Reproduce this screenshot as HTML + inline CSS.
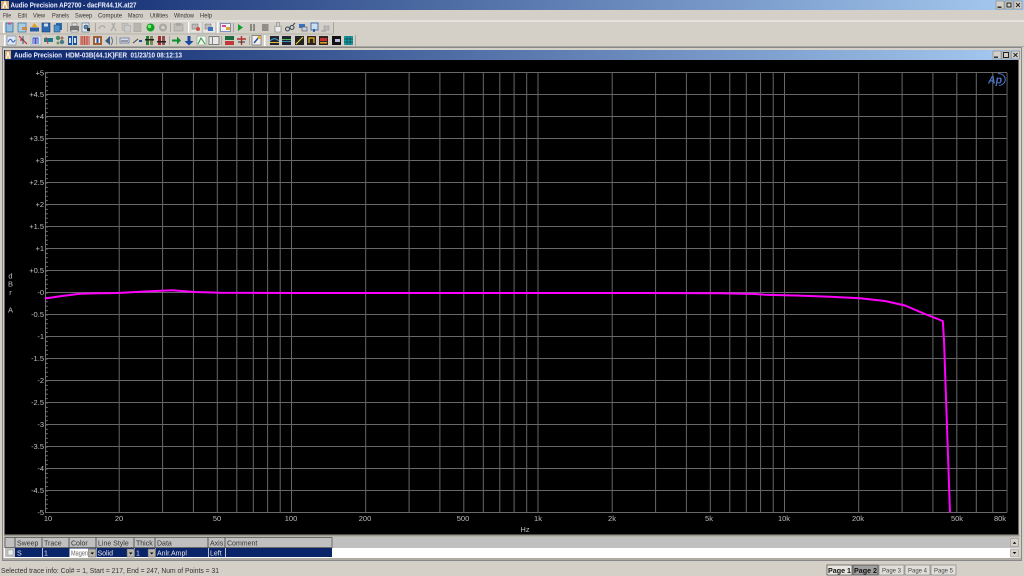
<!DOCTYPE html>
<html><head><meta charset="utf-8"><title>Audio Precision AP2700</title>
<style>
html,body{margin:0;padding:0;background:#d4d0c8;width:1024px;height:576px;overflow:hidden}
svg{display:block;filter:blur(.3px)}
text{font-family:"Liberation Sans",sans-serif}
.m{font-size:6.5px;fill:#333}
.y{font-size:7.5px;fill:#c0c0c0;text-anchor:end}
.x{font-size:7.5px;fill:#c0c0c0;text-anchor:middle}
.h{font-size:7px;fill:#333}
.r{font-size:7px;fill:#e4e4e4}
</style></head><body>
<svg width="1024" height="576" viewBox="0 0 1024 576" xmlns="http://www.w3.org/2000/svg">
<defs>
<linearGradient id="tb" x1="0" x2="1" y1="0" y2="0"><stop offset="0" stop-color="#0a246a"/><stop offset="1" stop-color="#a6caf0"/></linearGradient>
<g id="dec" stroke="#686868" stroke-width="1">
<line x1="74.2" x2="74.2" y1="72.5" y2="512.5"/><line x1="117.6" x2="117.6" y1="72.5" y2="512.5"/><line x1="148.4" x2="148.4" y1="72.5" y2="512.5"/><line x1="172.3" x2="172.3" y1="72.5" y2="512.5"/><line x1="191.8" x2="191.8" y1="72.5" y2="512.5"/><line x1="208.3" x2="208.3" y1="72.5" y2="512.5"/><line x1="222.6" x2="222.6" y1="72.5" y2="512.5"/><line x1="235.2" x2="235.2" y1="72.5" y2="512.5"/><line x1="246.5" x2="246.5" y1="72.5" y2="512.5"/>
</g>
<clipPath id="pc"><rect x="45" y="70" width="962.5" height="445"/></clipPath>
</defs>

<!-- main title -->
<rect x="0" y="0" width="1024" height="10" fill="url(#tb)"/>
<rect x="1" y="1" width="8" height="8" fill="#d8b070"/><path d="M3 8 L5 2 L7 8" stroke="#fff" stroke-width="1.2" fill="none"/>
<text x="10.5" y="7.5" font-size="7" font-weight="bold" fill="#eef" textLength="126" lengthAdjust="spacingAndGlyphs">Audio Precision AP2700 - dacFR44.1K.at27</text>
<g>
<rect x="996" y="1" width="8" height="8" fill="#d4d0c8" stroke="#777" stroke-width=".5"/><rect x="997.5" y="6.5" width="4" height="1.4" fill="#222"/>
<rect x="1005" y="1" width="8" height="8" fill="#d4d0c8" stroke="#777" stroke-width=".5"/><rect x="1007" y="3" width="4" height="4" fill="none" stroke="#222" stroke-width="1"/>
<rect x="1014" y="1" width="8" height="8" fill="#d4d0c8" stroke="#777" stroke-width=".5"/><path d="M1016 3l4 4m0-4l-4 4" stroke="#222" stroke-width="1"/>
</g>

<!-- menu -->
<g class="m">
<text class="m" x="3" y="17.5" textLength="8" lengthAdjust="spacingAndGlyphs">File</text>
<text class="m" x="18" y="17.5" textLength="9" lengthAdjust="spacingAndGlyphs">Edit</text>
<text class="m" x="33" y="17.5" textLength="12" lengthAdjust="spacingAndGlyphs">View</text>
<text class="m" x="52" y="17.5" textLength="17" lengthAdjust="spacingAndGlyphs">Panels</text>
<text class="m" x="75" y="17.5" textLength="17" lengthAdjust="spacingAndGlyphs">Sweep</text>
<text class="m" x="98" y="17.5" textLength="24" lengthAdjust="spacingAndGlyphs">Compute</text>
<text class="m" x="128" y="17.5" textLength="15" lengthAdjust="spacingAndGlyphs">Macro</text>
<text class="m" x="150" y="17.5" textLength="18" lengthAdjust="spacingAndGlyphs">Utilities</text>
<text class="m" x="174" y="17.5" textLength="20" lengthAdjust="spacingAndGlyphs">Window</text>
<text class="m" x="200" y="17.5" textLength="12" lengthAdjust="spacingAndGlyphs">Help</text>
</g>
<rect x="0" y="20.5" width="1024" height="1" fill="#f4f3ef"/>
<rect x="0" y="33.5" width="334" height="1" fill="#b5b2aa"/>
<rect x="0" y="46" width="1024" height="1" fill="#aaa79f"/>

<!-- toolbar grippers/separators -->
<g fill="#fff">
<rect x="3" y="22" width="1.5" height="11"/><rect x="4" y="35" width="1.5" height="11"/>
<rect x="188" y="22" width="1.5" height="11"/><rect x="217" y="22" width="1.5" height="11"/>
<rect x="264" y="35" width="1.5" height="11"/>
</g>
<g fill="#a8a59d">
<rect x="67" y="23" width="1" height="9"/><rect x="95" y="23" width="1" height="9"/><rect x="170" y="23" width="1" height="9"/><rect x="233" y="23" width="1" height="9"/><rect x="333" y="22" width="1" height="11"/>
<rect x="116" y="36" width="1" height="9"/><rect x="169" y="36" width="1" height="9"/><rect x="221" y="36" width="1" height="9"/><rect x="249" y="36" width="1" height="9"/><rect x="355" y="35" width="1" height="11"/>
</g>

<!-- row 1 icons -->
<rect x="6" y="23" width="7" height="9" fill="#8fc0e0" stroke="#3a6a9a" stroke-width=".8"/><rect x="8" y="22.5" width="3" height="2" fill="#d04a80"/>
<rect x="18" y="23" width="8" height="9" fill="#a8cde4" stroke="#4a7aa0" stroke-width=".8"/><rect x="22" y="27" width="5" height="3" fill="#d08a40"/>
<path d="M30 31.5h9v-4h-9z" fill="#2a5aa0"/><path d="M34.500 23l3 4h-6z" fill="#e0a020"/>
<rect x="42" y="23" width="8" height="9" fill="#2a6ab0" stroke="#1a3a70" stroke-width=".6"/><rect x="44" y="23.500" width="4" height="3" fill="#cde"/>
<rect x="56" y="23" width="6" height="7" fill="#2a6ab0"/><rect x="54" y="25" width="6" height="7" fill="#4a90c8" stroke="#1a3a70" stroke-width=".5"/>
<rect x="70" y="26" width="9" height="5" fill="#777"/><rect x="72" y="23" width="5" height="3" fill="#ddd" stroke="#666" stroke-width=".5"/><rect x="71" y="30" width="7" height="2" fill="#eee" stroke="#666" stroke-width=".5"/>
<rect x="82" y="23" width="7" height="9" fill="#dde8f0" stroke="#6a7a90" stroke-width=".7"/><circle cx="86" cy="27" r="2" fill="#5a90c0" stroke="#234" stroke-width=".6"/><rect x="87" y="28" width="3" height="3" fill="#333"/>
<path d="M99 29c1-4 5-4 6-1" fill="none" stroke="#aaa" stroke-width="1.3"/>
<path d="M112 23l4 8m-1-8l-4 8" stroke="#aaa" stroke-width="1.3"/>
<rect x="122" y="23.500" width="6" height="7" fill="#c4c2bc" stroke="#aaa" stroke-width=".6"/><rect x="124.500" y="25.500" width="6" height="6.500" fill="#ccc" stroke="#aaa" stroke-width=".6"/>
<rect x="134" y="23.500" width="7" height="8" fill="#b8b6b0" stroke="#a0a0a0" stroke-width=".6"/>
<circle cx="150.500" cy="27.500" r="4" fill="#12a020"/><circle cx="149.500" cy="26.500" r="1.700" fill="#7fe87f"/>
<circle cx="163" cy="27.500" r="4" fill="#aaa8a2"/><circle cx="163" cy="27.500" r="1.800" fill="#d4d0c8"/>
<rect x="174" y="24" width="9" height="7" fill="#c0beb8" stroke="#999" stroke-width=".6"/><rect x="176" y="23" width="5" height="3" fill="#a8a6a0"/>
<rect x="190" y="22" width="12" height="11" fill="#e4e2dc" stroke="#bbb" stroke-width=".5"/>
<rect x="192" y="24" width="6" height="5" fill="#bbb" stroke="#777" stroke-width=".6"/><circle cx="198" cy="29" r="2" fill="#c85040"/>
<rect x="203" y="22" width="12.500" height="11" fill="#e8e6e0" stroke="#b8b8b8" stroke-width=".5"/>
<rect x="205" y="24" width="6" height="5" fill="#bbb" stroke="#777" stroke-width=".6"/><rect x="208" y="27" width="5" height="4" fill="#3a70c0"/>
<rect x="220.500" y="23.500" width="10" height="8" fill="#f0f0f8" stroke="#5a70a0" stroke-width=".7"/><rect x="222" y="25" width="4" height="2" fill="#d04a90"/><rect x="226" y="27" width="4" height="3" fill="#e0a030"/>
<path d="M238 24l5 3.500-5 3.500z" fill="#10a030"/>
<rect x="250" y="24" width="2" height="7" fill="#8a8880"/><rect x="253" y="24" width="2" height="7" fill="#8a8880"/>
<rect x="262" y="24" width="6.500" height="7" fill="#908e86"/>
<path d="M275 26h6v6h-6z" fill="#eee" stroke="#777" stroke-width=".6"/><rect x="276.500" y="22.500" width="3" height="4" fill="#ccc" stroke="#777" stroke-width=".5"/>
<circle cx="287.500" cy="29" r="2" fill="none" stroke="#345" stroke-width="1"/><circle cx="292" cy="27.500" r="2" fill="none" stroke="#345" stroke-width="1"/><path d="M293 25l2-2" stroke="#345"/>
<rect x="299" y="24" width="6" height="4" fill="#3a70c0"/><rect x="302" y="27" width="5" height="4" fill="#ccd" stroke="#456" stroke-width=".6"/>
<rect x="311" y="23" width="7" height="7" fill="#cde" stroke="#2a5aa0" stroke-width=".8"/><path d="M314 29v3" stroke="#12409a" stroke-width="1.500"/>
<rect x="324" y="26" width="5" height="4" fill="#bbb" stroke="#999" stroke-width=".6"/><path d="M321 31h5" stroke="#aaa" stroke-width="1.500"/>

<!-- row 2 icons -->
<rect x="7" y="36" width="9" height="9" fill="#dfe8f2" stroke="#7a8aa8" stroke-width=".7"/><path d="M8 42c2-4 3-3 4-1s2 1 3-1" fill="none" stroke="#3060c0" stroke-width="1"/>
<path d="M19 36l8 8M20 40h4" stroke="#c03030" stroke-width="1.200"/><path d="M23 36v8" stroke="#2a5a90"/>
<rect x="31" y="36" width="10" height="9" fill="#dfe4f2" stroke="#9aa" stroke-width=".6"/><path d="M33 44v-6h2v6m1 0v-6h2v6" fill="none" stroke="#4050c0" stroke-width="1"/>
<rect x="44" y="38" width="9" height="4" fill="#1a7a90"/><path d="M46 37l2 7" stroke="#c04040" stroke-width="1"/>
<circle cx="58" cy="38" r="2.200" fill="#4a8a6a"/><circle cx="62" cy="42" r="2.200" fill="#4a7a8a"/><circle cx="62" cy="38" r="1.500" fill="#a07050"/><circle cx="58" cy="43" r="1.500" fill="#6a9a5a"/>
<rect x="68" y="36" width="4" height="9" fill="#1a50a0"/><rect x="73" y="36" width="4" height="9" fill="#1a50a0"/><rect x="69" y="38" width="2" height="5" fill="#cde"/><rect x="74" y="38" width="2" height="5" fill="#cde"/>
<rect x="80" y="36" width="10" height="9" fill="#d88a80"/><path d="M82 36v9M84.500 36v9M87 36v9" stroke="#a84a3a" stroke-width=".8"/>
<rect x="93" y="36" width="9" height="9" fill="#a06030"/><rect x="95" y="38" width="5" height="5" fill="#eef"/><rect x="96.500" y="38" width="2" height="5" fill="#2050a0"/>
<path d="M105 41l5-5v9z" fill="#3a5a80"/><path d="M111 37c2 2 2 6 0 8" fill="none" stroke="#5a7a90"/>
<rect x="120" y="38" width="9" height="5" fill="#d8dcec" stroke="#5a6a9a" stroke-width=".7"/><path d="M121 41h7" stroke="#334" stroke-width=".8"/>
<path d="M133 43l5-4" stroke="#444" stroke-width="1"/><rect x="139" y="40" width="3" height="2" fill="#2050a0"/>
<rect x="146" y="36" width="3" height="9" fill="#2a7a3a"/><rect x="150" y="36" width="3" height="9" fill="#7a8a50"/><rect x="145" y="39" width="9" height="1.500" fill="#222"/>
<rect x="158" y="36" width="3" height="9" fill="#a03030"/><rect x="162" y="36" width="3" height="9" fill="#8a5050"/><rect x="157" y="41" width="9" height="1.500" fill="#222"/>
<path d="M172 39.500h5v-3l4 4-4 4v-3h-5z" fill="#109030"/>
<path d="M187.500 36h3v5h3l-4.500 4.500-4.500-4.500h3z" fill="#1a4aa0"/>
<rect x="197" y="36" width="9" height="9" fill="#eef4ee" stroke="#8a9a8a" stroke-width=".6"/><path d="M198 44l3-6 4 6" fill="none" stroke="#2a9a3a"/>
<rect x="209" y="36.500" width="10" height="8" fill="#e8e8e8" stroke="#666" stroke-width=".8"/><rect x="212" y="37" width=".8" height="7" fill="#666"/>
<rect x="225" y="36" width="9" height="4" fill="#1a6a40"/><rect x="225" y="41" width="9" height="4" fill="#c03a3a"/>
<path d="M237 39h9M241.500 36v9" stroke="#b03030" stroke-width="1.400"/><path d="M238 42h7" stroke="#333"/>
<rect x="252" y="35.500" width="9" height="9.500" fill="#f0f0f0" stroke="#666" stroke-width=".7"/><path d="M254 43l5-6" stroke="#204a90" stroke-width="1.400"/><rect x="258" y="36" width="3" height="3" fill="#e0b030"/>

<rect x="270" y="36" width="9" height="9" fill="#223"/><path d="M270 41c3-3 6-3 9 0" stroke="#3ab0d0" fill="none"/><rect x="270" y="42" width="9" height="1" fill="#e0c030"/>
<rect x="282" y="36" width="9" height="9" fill="#223"/><rect x="282" y="39" width="9" height="1" fill="#4ac050"/><rect x="282" y="41" width="9" height="1" fill="#3a90b0"/>
<rect x="295" y="36" width="9" height="9" fill="#222"/><path d="M296 44l7-7" stroke="#e0d030" stroke-width="1.200"/>
<rect x="307" y="36" width="9" height="9" fill="#322"/><path d="M309 43v-5h5v5" stroke="#e0c020" fill="none" stroke-width="1.200"/>
<rect x="319" y="36" width="9" height="9" fill="#322"/><rect x="320" y="38" width="7" height="3" fill="#c03030"/><rect x="320" y="42" width="7" height="1.500" fill="#d0a020"/>
<rect x="332" y="36" width="9" height="9" fill="#111"/><rect x="335" y="39" width="5" height="3" fill="#bbd"/>
<rect x="344" y="36" width="9" height="9" fill="#1a9aa0"/><path d="M344 39h9M344 42h9M347 36v9M350 36v9" stroke="#0a4a50" stroke-width=".7"/>

<!-- inner window -->
<rect x="2.500" y="47.500" width="1019" height="513" fill="#d4d0c8" stroke="#888" stroke-width="1"/>
<rect x="4" y="50" width="1016" height="10" fill="url(#tb)"/>
<rect x="5" y="50.500" width="6" height="8.500" fill="#d8b070"/><path d="M6.500 58.500L8 52l1.500 6.500" stroke="#fff" fill="none"/>
<text x="14" y="57.300" font-size="7" font-weight="bold" fill="#eef" textLength="168" lengthAdjust="spacingAndGlyphs" xml:space="preserve">Audio Precision  HDM-03B(44.1K)FER  01/23/10 08:12:13</text>
<rect x="993" y="51" width="8" height="8" fill="#d4d0c8" stroke="#777" stroke-width=".5"/><rect x="994" y="56.500" width="4" height="1.400" fill="#222"/>
<rect x="1002" y="51" width="8" height="8" fill="#d4d0c8" stroke="#777" stroke-width=".5"/><rect x="1003.500" y="52.500" width="5" height="5" fill="none" stroke="#222" stroke-width="1"/>
<rect x="1011.500" y="51" width="8" height="8" fill="#d4d0c8" stroke="#777" stroke-width=".5"/><path d="M1013.500 53l4 4m0-4l-4 4" stroke="#222" stroke-width="1"/>

<!-- plot -->
<rect x="4.500" y="60" width="1014" height="474.500" fill="#000"/>
<g clip-path="url(#pc)">
<line x1="45.500" x2="45.500" y1="72.500" y2="512.500" stroke="#707070"/>
<use href="#dec" x="45"/><use href="#dec" x="291.500"/><use href="#dec" x="538"/><use href="#dec" x="784.500"/>
</g>
<g stroke="#686868" stroke-width="1">
<line x1="45" x2="1007" y1="72.500" y2="72.500"/><line x1="45" x2="1007" y1="94.500" y2="94.500"/><line x1="45" x2="1007" y1="116.500" y2="116.500"/><line x1="45" x2="1007" y1="138.500" y2="138.500"/><line x1="45" x2="1007" y1="160.500" y2="160.500"/><line x1="45" x2="1007" y1="182.500" y2="182.500"/><line x1="45" x2="1007" y1="204.500" y2="204.500"/><line x1="45" x2="1007" y1="226.500" y2="226.500"/><line x1="45" x2="1007" y1="248.500" y2="248.500"/><line x1="45" x2="1007" y1="270.500" y2="270.500"/><line x1="45" x2="1007" y1="292.500" y2="292.500"/><line x1="45" x2="1007" y1="314.500" y2="314.500"/><line x1="45" x2="1007" y1="336.500" y2="336.500"/><line x1="45" x2="1007" y1="358.500" y2="358.500"/><line x1="45" x2="1007" y1="380.500" y2="380.500"/><line x1="45" x2="1007" y1="402.500" y2="402.500"/><line x1="45" x2="1007" y1="424.500" y2="424.500"/><line x1="45" x2="1007" y1="446.500" y2="446.500"/><line x1="45" x2="1007" y1="468.500" y2="468.500"/><line x1="45" x2="1007" y1="490.500" y2="490.500"/><line x1="45" x2="1007" y1="512.500" y2="512.500"/>
</g>
<line x1="46.500" x2="46.500" y1="72.500" y2="512.500" stroke="#777" stroke-width="2.500" stroke-dasharray="1 3.400"/>

<g class="y">
<text class="y" x="44" y="75.500">+5</text><text class="y" x="44" y="97">+4.5</text><text class="y" x="44" y="119">+4</text><text class="y" x="44" y="141">+3.5</text><text class="y" x="44" y="163">+3</text><text class="y" x="44" y="185">+2.5</text><text class="y" x="44" y="207">+2</text><text class="y" x="44" y="229">+1.5</text><text class="y" x="44" y="251">+1</text><text class="y" x="44" y="273">+0.5</text><text class="y" x="44" y="295">-0</text><text class="y" x="44" y="317">-0.5</text><text class="y" x="44" y="339">-1</text><text class="y" x="44" y="361">-1.5</text><text class="y" x="44" y="383">-2</text><text class="y" x="44" y="405">-2.5</text><text class="y" x="44" y="427">-3</text><text class="y" x="44" y="449">-3.5</text><text class="y" x="44" y="471">-4</text><text class="y" x="44" y="493">-4.5</text><text class="y" x="44" y="515">-5</text>
</g>
<g class="x">
<text class="x" x="48" y="521">10</text><text class="x" x="119" y="521">20</text><text class="x" x="217" y="521">50</text><text class="x" x="291" y="521">100</text><text class="x" x="365" y="521">200</text><text class="x" x="463" y="521">500</text><text class="x" x="538" y="521">1k</text><text class="x" x="612" y="521">2k</text><text class="x" x="709" y="521">5k</text><text class="x" x="784" y="521">10k</text><text class="x" x="858" y="521">20k</text><text class="x" x="957" y="521">50k</text><text class="x" x="1000" y="521">80k</text><text class="x" x="525" y="532">Hz</text>
</g>
<g class="x">
<text class="x" x="10.500" y="278.500">d</text><text class="x" x="10.500" y="286.500">B</text><text class="x" x="10.500" y="295">r</text><text class="x" x="10.500" y="312.500">A</text>
</g>
<!-- AP logo -->
<text x="988" y="83.500" font-size="11" font-weight="bold" font-style="italic" fill="#4a72c4" textLength="14" lengthAdjust="spacingAndGlyphs">Ap</text>
<path d="M998 73.500c9 0 10 11 1 12" fill="none" stroke="#4a72c4" stroke-width="1"/>
<!-- trace -->
<polyline fill="none" stroke="#ff00ff" stroke-width="2" stroke-linejoin="round" points="45,298.500 62,296 80,293.800 100,293.200 118,293 145,291.500 172,290.300 195,292 220,292.700 300,293 500,293 640,293 720,293.300 755,294 765,294.700 800,295.600 830,296.700 860,298.300 885,301 905,305.500 925,314 942.800,321 944,340 950,512.500"/>

<!-- table -->
<rect x="4" y="534.500" width="1015.500" height="2" fill="#9a978f"/>
<rect x="4" y="537" width="1015" height="11" fill="#c0c0c0"/>
<rect x="4" y="548" width="1015" height="10" fill="#fff"/>
<g fill="none" stroke="#555" stroke-width=".8">
<rect x="5" y="537.500" width="10" height="10"/><rect x="15" y="537.500" width="27" height="10"/><rect x="42" y="537.500" width="27" height="10"/><rect x="69" y="537.500" width="27" height="10"/><rect x="96" y="537.500" width="38" height="10"/><rect x="134" y="537.500" width="21" height="10"/><rect x="155" y="537.500" width="53" height="10"/><rect x="208" y="537.500" width="17" height="10"/><rect x="225" y="537.500" width="107" height="10"/>
</g>
<rect x="5" y="548" width="327" height="9" fill="#0a246a"/>
<rect x="5" y="548" width="10" height="9" fill="#c0c0c0"/>
<rect x="8" y="550" width="5" height="5" fill="#eee" stroke="#999" stroke-width=".5"/>
<rect x="69.500" y="548.500" width="26" height="8.500" fill="#fff"/>
<g fill="#fff"><rect x="42" y="548" width=".7" height="9"/><rect x="96" y="548" width=".7" height="9"/><rect x="134" y="548" width=".7" height="9"/><rect x="155" y="548" width=".7" height="9"/><rect x="208" y="548" width=".7" height="9"/><rect x="225" y="548" width=".7" height="9"/></g>
<rect x="88.500" y="549" width="7.500" height="8" fill="#b5b2aa" stroke="#555" stroke-width=".5"/><path d="M90.500 552.500h3.500l-1.750 2z" fill="#000"/>
<rect x="127" y="549" width="7.500" height="8" fill="#b5b2aa" stroke="#555" stroke-width=".5"/><path d="M129 552.500h3.500l-1.750 2z" fill="#000"/>
<rect x="148" y="549" width="7.500" height="8" fill="#b5b2aa" stroke="#555" stroke-width=".5"/><path d="M150 552.500h3.500l-1.750 2z" fill="#000"/>
<text class="h" x="17" y="545.500">Sweep</text><text class="h" x="44" y="545.500">Trace</text><text class="h" x="71" y="545.500">Color</text><text class="h" x="98" y="545.500">Line Style</text><text class="h" x="136" y="545.500">Thick</text><text class="h" x="157" y="545.500">Data</text><text class="h" x="210" y="545.500">Axis</text><text class="h" x="227" y="545.500">Comment</text>
<text class="r" x="17" y="555.500">S</text><text class="r" x="44" y="555.500">1</text>
<text x="71" y="555.500" font-size="7" fill="#666" textLength="17" lengthAdjust="spacingAndGlyphs">Magen</text>
<text class="r" x="97.500" y="555.500">Solid</text><text class="r" x="136" y="555.500">1</text><text class="r" x="157" y="555.500">Anlr.Ampl</text><text class="r" x="210" y="555.500">Left</text>
<!-- scroll buttons -->
<rect x="1010.500" y="538.500" width="8" height="8" fill="#d4d0c8" stroke="#888" stroke-width=".5"/><path d="M1012.700 543.800h3.600l-1.800-2z" fill="#000"/>
<rect x="1010.500" y="549" width="8" height="8" fill="#d4d0c8" stroke="#888" stroke-width=".5"/><path d="M1012.700 552h3.600l-1.800 2z" fill="#000"/>
<rect x="3" y="558.500" width="1018" height="1" fill="#8a877f"/>

<!-- status -->
<text x="1" y="573" font-size="7.500" fill="#333" textLength="218" lengthAdjust="spacingAndGlyphs">Selected trace info: Col# = 1, Start = 217, End = 247, Num of Points = 31</text>
<!-- tabs -->
<rect x="827" y="565" width="25" height="10" fill="#e8e6e0" stroke="#333" stroke-width=".6"/>
<rect x="853" y="565" width="25" height="10" fill="#a0a0a0" stroke="#333" stroke-width=".6"/>
<rect x="879" y="565" width="25" height="10" fill="#e0ded8" stroke="#666" stroke-width=".5"/>
<rect x="905" y="565" width="25" height="10" fill="#e0ded8" stroke="#666" stroke-width=".5"/>
<rect x="931" y="565" width="25" height="10" fill="#e0ded8" stroke="#666" stroke-width=".5"/>
<text x="828" y="573" font-size="7.500" font-weight="bold" fill="#111" textLength="23" lengthAdjust="spacingAndGlyphs">Page 1</text>
<text x="854" y="573" font-size="7.500" font-weight="bold" fill="#111" textLength="23" lengthAdjust="spacingAndGlyphs">Page 2</text>
<text x="882" y="572.500" font-size="6" fill="#444" textLength="19" lengthAdjust="spacingAndGlyphs">Page 3</text>
<text x="908" y="572.500" font-size="6" fill="#444" textLength="19" lengthAdjust="spacingAndGlyphs">Page 4</text>
<text x="934" y="572.500" font-size="6" fill="#444" textLength="19" lengthAdjust="spacingAndGlyphs">Page 5</text>
</svg>
</body></html>
